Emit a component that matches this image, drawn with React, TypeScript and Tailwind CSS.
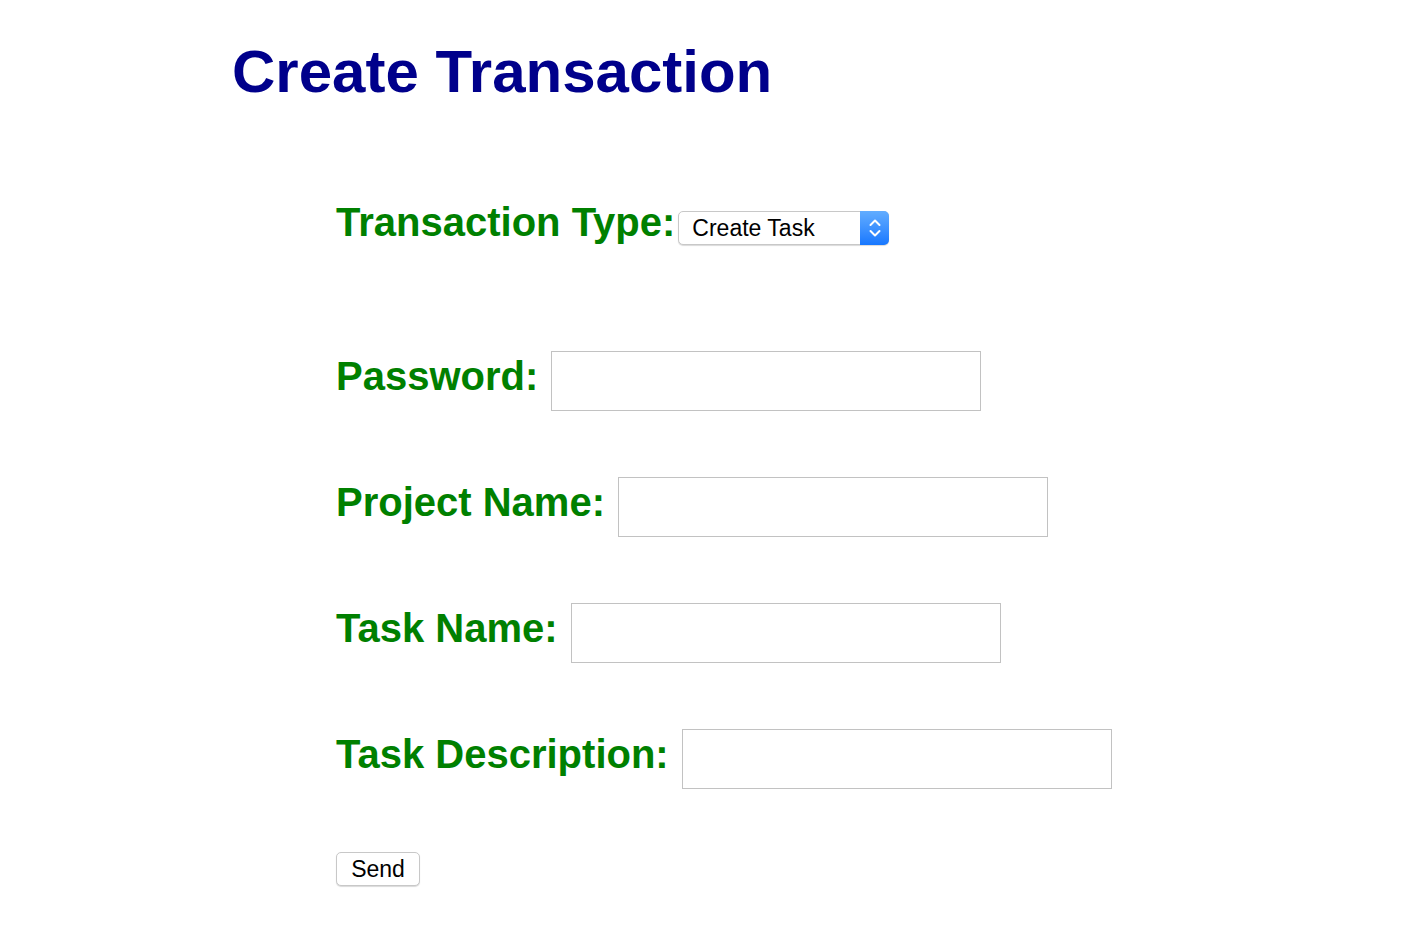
import { useState } from "react";

type FieldProps = {
  label: string;
  name: string;
  type?: string;
};

function Field({ label, name, type = "text" }: FieldProps) {
  return (
    <div className="mt-[66px] flex items-start first:mt-0">
      <label
        htmlFor={name}
        className="mt-[2px] text-[40px] font-bold leading-[46px] text-[#008000]"
      >
        {label}
      </label>
      <input
        id={name}
        name={name}
        type={type}
        className="ml-[13px] h-[60px] w-[430px] border border-[#c2c2c2] bg-white px-2 text-[22px] outline-none"
      />
    </div>
  );
}

function TypeSelect() {
  const [value, setValue] = useState("create-task");
  return (
    <div className="relative ml-[3px] mt-[11px] h-[34px] w-[211px]">
      <select
        value={value}
        onChange={(e) => setValue(e.target.value)}
        className="h-full w-full appearance-none rounded-[5px] border border-[#c8c8c8] bg-white pl-[13px] pr-[34px] text-[23px] leading-none text-black shadow-[0_1px_1px_rgba(0,0,0,0.15)] outline-none"
      >
        <option value="create-task">Create Task</option>
        <option value="create-project">Create Project</option>
        <option value="update-task">Update Task</option>
      </select>
      <div className="pointer-events-none absolute right-0 top-0 flex h-full w-[29px] items-center justify-center rounded-r-[5px] bg-gradient-to-b from-[#62adff] to-[#1677ff]">
        <svg width="14" height="24" viewBox="0 0 14 24" fill="none">
          <path
            d="M2.5 9 7 4.5 11.5 9M2.5 15 7 19.5 11.5 15"
            stroke="white"
            strokeWidth="2"
            strokeLinecap="round"
            strokeLinejoin="round"
          />
        </svg>
      </div>
    </div>
  );
}

export default function App() {
  return (
    <div
      className="min-h-screen bg-white pl-[232px] pt-[37px]"
      style={{ fontFamily: '"Liberation Sans", Arial, sans-serif' }}
    >
      <h1 className="text-[60px] font-bold leading-[69px] text-[#00008b]">
        Create Transaction
      </h1>

      <form
        className="ml-[104px] mt-[94px]"
        onSubmit={(e) => e.preventDefault()}
      >
        <div className="flex items-start">
          <label className="-mt-[1px] text-[40px] font-bold leading-[46px] text-[#008000]">
            Transaction Type:
          </label>
          <TypeSelect />
        </div>

        <div className="mt-[106px]">
          <Field label="Password:" name="password" type="password" />
          <Field label="Project Name:" name="projectName" />
          <Field label="Task Name:" name="taskName" />
          <Field label="Task Description:" name="taskDescription" />
        </div>

        <button
          type="submit"
          className="mt-[63px] h-[34px] w-[84px] rounded-[5px] border border-[#c8c8c8] bg-white text-[23px] leading-none text-black shadow-[0_1px_1px_rgba(0,0,0,0.15)]"
        >
          Send
        </button>
      </form>
    </div>
  );
}
